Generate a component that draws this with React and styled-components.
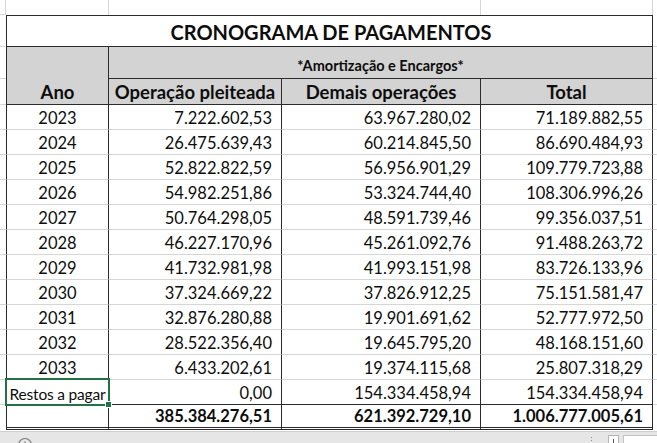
import React from 'react';
import styled, { createGlobalStyle } from 'styled-components';

const GlobalStyle = createGlobalStyle`
  html, body {
    margin: 0;
    padding: 0;
    background: #ffffff;
    overflow: hidden;
  }
  body {
    font-family: Lato, "Liberation Sans", sans-serif;
    color: #0d0d0d;
  }
`;

const DARK = '#2b2b2b';
const GRID = '#d6d6d6';
const HEAD_BG = '#d3d3d3';

const Sheet = styled.div`
  display: grid;
  grid-template-columns: 6px 103px 173px 199px 172px 1fr;
  grid-template-rows: 15px 32px 32px 26px repeat(13, 25px);
  width: 657px;
  box-sizing: border-box;
  & > * {
    box-sizing: border-box;
  }
`;

const Blank = styled.div`
  grid-column: ${p => p.$span || 'auto'};
  border-right: ${p => (p.$line ? `1px solid ${GRID}` : 'none')};
  border-bottom: ${p => (p.$bottom ? `1px solid ${GRID}` : 'none')};
`;

const Title = styled.div`
  grid-column: 2 / 6;
  display: flex;
  align-items: center;
  justify-content: center;
  border: 1px solid ${DARK};
  font-weight: 700;
  font-size: 20px;
  padding: 2px 0 0 3px;
`;

const HeadCell = styled.div`
  grid-column: ${p => p.$col || 'auto'};
  grid-row: ${p => p.$row || 'auto'};
  display: flex;
  align-items: flex-end;
  justify-content: center;
  background: ${HEAD_BG};
  font-weight: 700;
  font-size: ${p => (p.$small ? '14.5px' : '18.5px')};
  padding-bottom: ${p => (p.$small ? '4px' : '1px')};
  border-right: 1px solid ${DARK};
  border-bottom: 1px solid ${DARK};
  border-left: ${p => (p.$first ? `1px solid ${DARK}` : 'none')};
  white-space: nowrap;
`;

const Cell = styled.div`
  position: relative;
  display: flex;
  align-items: flex-end;
  justify-content: ${p => (p.$align === 'right' ? 'flex-end' : 'center')};
  padding: 0 ${p => (p.$align === 'right' ? '9px' : '0')} 1px 0;
  font-size: 16.5px;
  font-weight: ${p => (p.$bold ? 700 : 400)};
  border-left: ${p => (p.$first ? `1px solid ${DARK}` : 'none')};
  border-right: 1px solid ${DARK};
  border-bottom: ${p =>
    p.$edge === 'total'
      ? `3px double ${DARK}`
      : p.$edge === 'dark'
      ? `1px solid ${DARK}`
      : `1px solid ${GRID}`};
  white-space: nowrap;
  ${p =>
    p.$selected &&
    `
    &::before {
      content: '';
      position: absolute;
      left: -2px;
      top: -2px;
      right: -2px;
      bottom: -2px;
      border: 2px solid #217346;
      z-index: 2;
    }
    &::after {
      content: '';
      position: absolute;
      right: -4px;
      bottom: -4px;
      width: 5px;
      height: 5px;
      background: #217346;
      border: 1px solid #fff;
      z-index: 3;
    }
  `}
`;

const Clip = styled.span`
  display: flex;
  justify-content: center;
  width: 100%;
  font-size: 15.5px;
  letter-spacing: -0.2px;
  white-space: nowrap;
`;

const Footer = styled.div`
  display: flex;
  align-items: flex-start;
  height: 14px;
  margin-top: 1px;
  background: #e6e6e6;
  border-top: 1px solid #cfcfcf;
  overflow: hidden;
  padding-left: 17px;
`;

const AddSheet = styled.div`
  margin-top: 5px;
  width: 16px;
  height: 16px;
`;

const Scroll = styled.div`
  display: flex;
  align-items: flex-start;
  margin-left: auto;
  gap: 4px;
  padding-top: 3px;
`;

const Dots = styled.div`
  display: flex;
  flex-direction: column;
  gap: 2px;
  margin-right: 12px;
  padding-top: 2px;
  & > span {
    width: 1px;
    height: 1px;
    background: #888;
  }
`;

const ArrowBox = styled.div`
  width: 9px;
  height: 10px;
  background: #fff;
  border: 1px solid #b5b5b5;
  display: flex;
  align-items: center;
  justify-content: center;
  & > span {
    width: 1px;
    height: 5px;
    background: #555;
  }
`;

const Track = styled.div`
  width: 33px;
  height: 12px;
  background: #fff;
  border: 1px solid #c4c4c4;
  border-right: none;
`;

const rows = [
  ['2023', '7.222.602,53', '63.967.280,02', '71.189.882,55'],
  ['2024', '26.475.639,43', '60.214.845,50', '86.690.484,93'],
  ['2025', '52.822.822,59', '56.956.901,29', '109.779.723,88'],
  ['2026', '54.982.251,86', '53.324.744,40', '108.306.996,26'],
  ['2027', '50.764.298,05', '48.591.739,46', '99.356.037,51'],
  ['2028', '46.227.170,96', '45.261.092,76', '91.488.263,72'],
  ['2029', '41.732.981,98', '41.993.151,98', '83.726.133,96'],
  ['2030', '37.324.669,22', '37.826.912,25', '75.151.581,47'],
  ['2031', '32.876.280,88', '19.901.691,62', '52.777.972,50'],
  ['2032', '28.522.356,40', '19.645.795,20', '48.168.151,60'],
  ['2033', '6.433.202,61', '19.374.115,68', '25.807.318,29'],
];

const restos = ['0,00', '154.334.458,94', '154.334.458,94'];
const totals = ['385.384.276,51', '621.392.729,10', '1.006.777.005,61'];

const App = () => {
  return (
    <>
      <GlobalStyle />
      <Sheet>
        {/* empty spreadsheet row above the table */}
        <Blank $line $bottom />
        <Blank $line />
        <Blank $span="span 2" $line />
        <Blank $line />
        <Blank />

        <Blank $bottom />
        <Title>CRONOGRAMA DE PAGAMENTOS</Title>
        <Blank $bottom />

        <Blank $bottom />
        <HeadCell $col="2" $row="3 / 5" $first>Ano</HeadCell>
        <HeadCell $col="3 / 6" $row="3" $small>*Amortização e Encargos*</HeadCell>
        <Blank $bottom />

        <Blank $bottom />
        <HeadCell>Operação pleiteada</HeadCell>
        <HeadCell>Demais operações</HeadCell>
        <HeadCell>Total</HeadCell>
        <Blank $bottom />

        {rows.map(r => (
          <React.Fragment key={r[0]}>
            <Blank $bottom />
            <Cell $first>{r[0]}</Cell>
            <Cell $align="right">{r[1]}</Cell>
            <Cell $align="right">{r[2]}</Cell>
            <Cell $align="right">{r[3]}</Cell>
            <Blank $bottom />
          </React.Fragment>
        ))}

        <Blank $bottom />
        <Cell $first $edge="dark" $selected>
          <Clip>Restos a pagar</Clip>
        </Cell>
        {restos.map((v, i) => (
          <Cell key={i} $align="right" $edge="dark">{v}</Cell>
        ))}
        <Blank $bottom />

        <Blank />
        <Cell $first $edge="total" />
        {totals.map((v, i) => (
          <Cell key={i} $align="right" $edge="total" $bold>{v}</Cell>
        ))}
        <Blank />
      </Sheet>

      <Footer>
        <AddSheet>
          <svg width="16" height="16" viewBox="0 0 16 16">
            <circle cx="8" cy="8" r="6.5" fill="none" stroke="#7a7a7a" strokeWidth="1.2" />
            <path d="M8 4.5v7M4.5 8h7" stroke="#7a7a7a" strokeWidth="1.2" />
          </svg>
        </AddSheet>
        <Scroll>
          <Dots>
            <span />
            <span />
            <span />
          </Dots>
          <ArrowBox>
            <span />
          </ArrowBox>
          <Track />
        </Scroll>
      </Footer>
    </>
  );
};

export default App;
